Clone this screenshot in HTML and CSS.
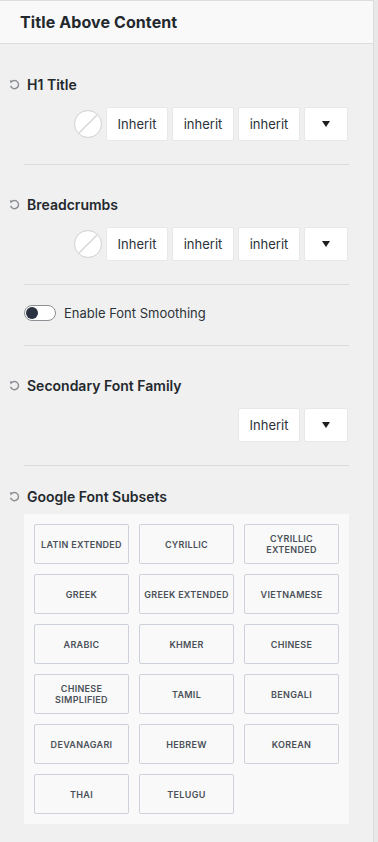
FILE: index.html
```html
<!DOCTYPE html>
<html lang="en">
<head>
    <meta charset="UTF-8">
    <meta name="viewport" content="width=device-width, initial-scale=1.0">
    <title>Title Above Content</title>
    <link rel="stylesheet" href="styles.css">
</head>
<body>
    <div class="panel">
        <div class="panel-header">Title Above Content</div>

        <div class="panel-body">
            <div class="section">
                <div class="label">
                    <svg class="reset" width="11" height="11" viewBox="0 0 10 10"><path d="M2.2 2.6 A3.7 3.7 0 1 1 1.4 6.2" fill="none" stroke="#8c8f94" stroke-width="1.3"/><path d="M0.6 1.2 L3.8 1.6 L1.6 4.2 Z" fill="#8c8f94"/></svg>
                    H1 Title
                </div>
                <div class="controls">
                    <div class="swatch"><svg width="26" height="26" viewBox="0 0 26 26"><line x1="22" y1="4" x2="4" y2="22" stroke="#d6d6d6" stroke-width="1.5"/></svg></div>
                    <div class="box">Inherit</div>
                    <div class="box">inherit</div>
                    <div class="box">inherit</div>
                    <div class="box drop"><span class="caret"></span></div>
                </div>
            </div>

            <div class="section">
                <div class="label">
                    <svg class="reset" width="11" height="11" viewBox="0 0 10 10"><path d="M2.2 2.6 A3.7 3.7 0 1 1 1.4 6.2" fill="none" stroke="#8c8f94" stroke-width="1.3"/><path d="M0.6 1.2 L3.8 1.6 L1.6 4.2 Z" fill="#8c8f94"/></svg>
                    Breadcrumbs
                </div>
                <div class="controls">
                    <div class="swatch"><svg width="26" height="26" viewBox="0 0 26 26"><line x1="22" y1="4" x2="4" y2="22" stroke="#d6d6d6" stroke-width="1.5"/></svg></div>
                    <div class="box">Inherit</div>
                    <div class="box">inherit</div>
                    <div class="box">inherit</div>
                    <div class="box drop"><span class="caret"></span></div>
                </div>
            </div>

            <div class="section toggle-section">
                <div class="toggle-row">
                    <span class="toggle"><span class="knob"></span></span>
                    Enable Font Smoothing
                </div>
            </div>

            <div class="section">
                <div class="label">
                    <svg class="reset" width="11" height="11" viewBox="0 0 10 10"><path d="M2.2 2.6 A3.7 3.7 0 1 1 1.4 6.2" fill="none" stroke="#8c8f94" stroke-width="1.3"/><path d="M0.6 1.2 L3.8 1.6 L1.6 4.2 Z" fill="#8c8f94"/></svg>
                    Secondary Font Family
                </div>
                <div class="controls">
                    <div class="box">Inherit</div>
                    <div class="box drop"><span class="caret"></span></div>
                </div>
            </div>

            <div class="section subsets-section">
                <div class="label">
                    <svg class="reset" width="11" height="11" viewBox="0 0 10 10"><path d="M2.2 2.6 A3.7 3.7 0 1 1 1.4 6.2" fill="none" stroke="#8c8f94" stroke-width="1.3"/><path d="M0.6 1.2 L3.8 1.6 L1.6 4.2 Z" fill="#8c8f94"/></svg>
                    Google Font Subsets
                </div>
                <div class="subsets">
                    <div class="subset">Latin Extended</div>
                    <div class="subset">Cyrillic</div>
                    <div class="subset">Cyrillic<br>Extended</div>
                    <div class="subset">Greek</div>
                    <div class="subset">Greek Extended</div>
                    <div class="subset">Vietnamese</div>
                    <div class="subset">Arabic</div>
                    <div class="subset">Khmer</div>
                    <div class="subset">Chinese</div>
                    <div class="subset">Chinese<br>Simplified</div>
                    <div class="subset">Tamil</div>
                    <div class="subset">Bengali</div>
                    <div class="subset">Devanagari</div>
                    <div class="subset">Hebrew</div>
                    <div class="subset">Korean</div>
                    <div class="subset">Thai</div>
                    <div class="subset">Telugu</div>
                </div>
            </div>
        </div>
    </div>
</body>
</html>
```

FILE: styles.css
```css
* {
    margin: 0;
    padding: 0;
    box-sizing: border-box;
}

body {
    font-family: Inter, "Noto Sans", sans-serif;
    background: #e8e8e8;
    color: #23282d;
}

.panel {
    width: 374px;
    min-height: 842px;
    background: #f0f0f0;
    border-right: 1px solid #dcdcdc;
}

.panel-header {
    height: 44px;
    padding: 0 20px;
    display: flex;
    align-items: center;
    background: #f9f9f9;
    border-top: 1px solid #dddddd;
    border-bottom: 1px solid #dddddd;
    font-size: 16px;
    font-weight: 700;
    letter-spacing: 0.1px;
}

.panel-body {
    padding: 1px 24px 0;
}

.section {
    padding: 31px 0 23px;
    border-bottom: 1px solid #dcdcde;
}

.label {
    display: flex;
    align-items: center;
    gap: 7px;
    margin-left: -15px;
    height: 16px;
    font-size: 14px;
    font-weight: 600;
}

.reset {
    flex-shrink: 0;
}

.controls {
    display: flex;
    justify-content: flex-end;
    align-items: center;
    gap: 4px;
    margin-top: 15px;
    margin-right: 1px;
}

.swatch {
    width: 28px;
    height: 28px;
    border-radius: 50%;
    background: #fff;
    border: 1px solid #d0d0d0;
    overflow: hidden;
}

.swatch svg {
    display: block;
}

.box {
    width: 62px;
    height: 34px;
    display: flex;
    align-items: center;
    justify-content: center;
    background: #fff;
    border: 1px solid #e8e8e8;
    border-radius: 2px;
    font-size: 13px;
    color: #2c3338;
}

.drop {
    width: 44px;
}

.caret {
    width: 0;
    height: 0;
    border-left: 4px solid transparent;
    border-right: 4px solid transparent;
    border-top: 6px solid #1e1e1e;
}

.toggle-section {
    padding: 20px 0 24px;
}

.toggle-row {
    display: flex;
    align-items: center;
    gap: 8px;
    height: 16px;
    font-size: 13px;
    color: #2c3338;
}

.toggle {
    position: relative;
    width: 32px;
    height: 16px;
    border: 1px solid #8c8f94;
    border-radius: 8px;
    background: #fff;
}

.knob {
    position: absolute;
    top: 1px;
    left: 1px;
    width: 12px;
    height: 12px;
    border-radius: 50%;
    background: #2a3140;
}

.subsets-section {
    padding-top: 22px;
    border-bottom: none;
}

.subsets {
    margin-top: 10px;
    padding: 10px;
    background: #f9f9f9;
    display: grid;
    grid-template-columns: repeat(3, 1fr);
    grid-auto-rows: 40px;
    gap: 10px;
}

.subset {
    display: flex;
    align-items: center;
    justify-content: center;
    text-align: center;
    border: 1px solid #cdd1dc;
    border-radius: 2px;
    font-size: 9px;
    line-height: 11px;
    font-weight: 600;
    letter-spacing: 0.3px;
    text-transform: uppercase;
    color: #4a5058;
}
```
